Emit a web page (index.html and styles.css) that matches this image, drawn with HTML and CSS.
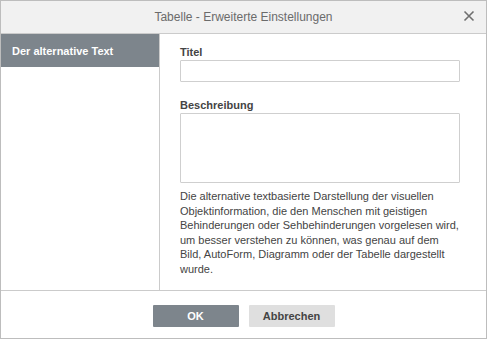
FILE: index.html
```html
<!DOCTYPE html>
<html lang="de">
<head>
  <meta charset="UTF-8" />
  <title>Tabelle - Erweiterte Einstellungen</title>
  <link rel="stylesheet" href="styles.css">
</head>
<body>
  <div class="dialog">
    <div class="dialog-header">
      <span class="dialog-title">Tabelle - Erweiterte Einstellungen</span>
      <svg class="close" width="12" height="12" viewBox="0 0 12 12">
        <path d="M1.5 1.5 L10.5 10.5 M10.5 1.5 L1.5 10.5" stroke="#6f6f6f" stroke-width="1.6" fill="none"/>
      </svg>
    </div>

    <div class="dialog-body">
      <div class="sidebar">
        <div class="nav-item active">Der alternative Text</div>
      </div>

      <div class="content">
        <label class="field-label">Titel</label>
        <input class="field-input" type="text">

        <label class="field-label desc-label">Beschreibung</label>
        <textarea class="field-textarea"></textarea>

        <p class="hint">Die alternative textbasierte Darstellung der visuellen Objektinformation, die den Menschen mit geistigen Behinderungen oder Sehbehinderungen vorgelesen wird, um besser verstehen zu können, was genau auf dem Bild, AutoForm, Diagramm oder der Tabelle dargestellt wurde.</p>
      </div>
    </div>

    <div class="dialog-footer">
      <button class="btn btn-primary">OK</button>
      <button class="btn">Abbrechen</button>
    </div>
  </div>
</body>
</html>
```

FILE: styles.css
```css
* {
  margin: 0;
  padding: 0;
  box-sizing: border-box;
}

body {
  font-family: 'Liberation Sans', Arial, sans-serif;
  font-size: 11px;
  color: #444;
  background: white;
}

.dialog {
  width: 487px;
  height: 339px;
  border: 1px solid #bdbdbd;
  display: flex;
  flex-direction: column;
  background: white;
}

.dialog-header {
  height: 33px;
  flex-shrink: 0;
  display: flex;
  align-items: center;
  justify-content: center;
  position: relative;
  background: #f1f1f1;
  border-bottom: 1px solid #cbcbcb;
}

.dialog-title {
  font-size: 12px;
  color: #6b6b6b;
}

.close {
  position: absolute;
  right: 11px;
  top: 9px;
}

.dialog-body {
  height: 257px;
  display: flex;
  border-bottom: 1px solid #cbcbcb;
}

.sidebar {
  width: 159px;
  flex-shrink: 0;
  border-right: 1px solid #cbcbcb;
}

.nav-item {
  height: 33px;
  padding: 0 11px;
  display: flex;
  align-items: center;
  font-weight: bold;
  color: white;
}

.nav-item.active {
  background: #7d858c;
}

.content {
  padding: 11px 0 0 20px;
  display: flex;
  flex-direction: column;
  align-items: flex-start;
}

.field-label {
  line-height: 14px;
  font-weight: bold;
  margin-bottom: 1px;
}

.desc-label {
  margin-top: 16px;
}

.field-input,
.field-textarea {
  width: 280px;
  border: 1px solid #cfcfcf;
  border-radius: 1px;
  background: white;
  font: inherit;
  outline: none;
}

.field-input {
  height: 22px;
}

.field-textarea {
  height: 70px;
  resize: none;
}

.hint {
  width: 282px;
  margin-top: 6px;
  line-height: 14.6px;
}

.dialog-footer {
  flex: 1;
  display: flex;
  justify-content: center;
  align-items: flex-start;
  gap: 10px;
  padding-top: 14px;
}

.btn {
  width: 86px;
  height: 22px;
  border: none;
  border-radius: 1px;
  background: #dfdfdf;
  color: #444;
  font-family: inherit;
  font-size: 11px;
  font-weight: bold;
  cursor: pointer;
}

.btn-primary {
  background: #7d858c;
  color: white;
}
```
